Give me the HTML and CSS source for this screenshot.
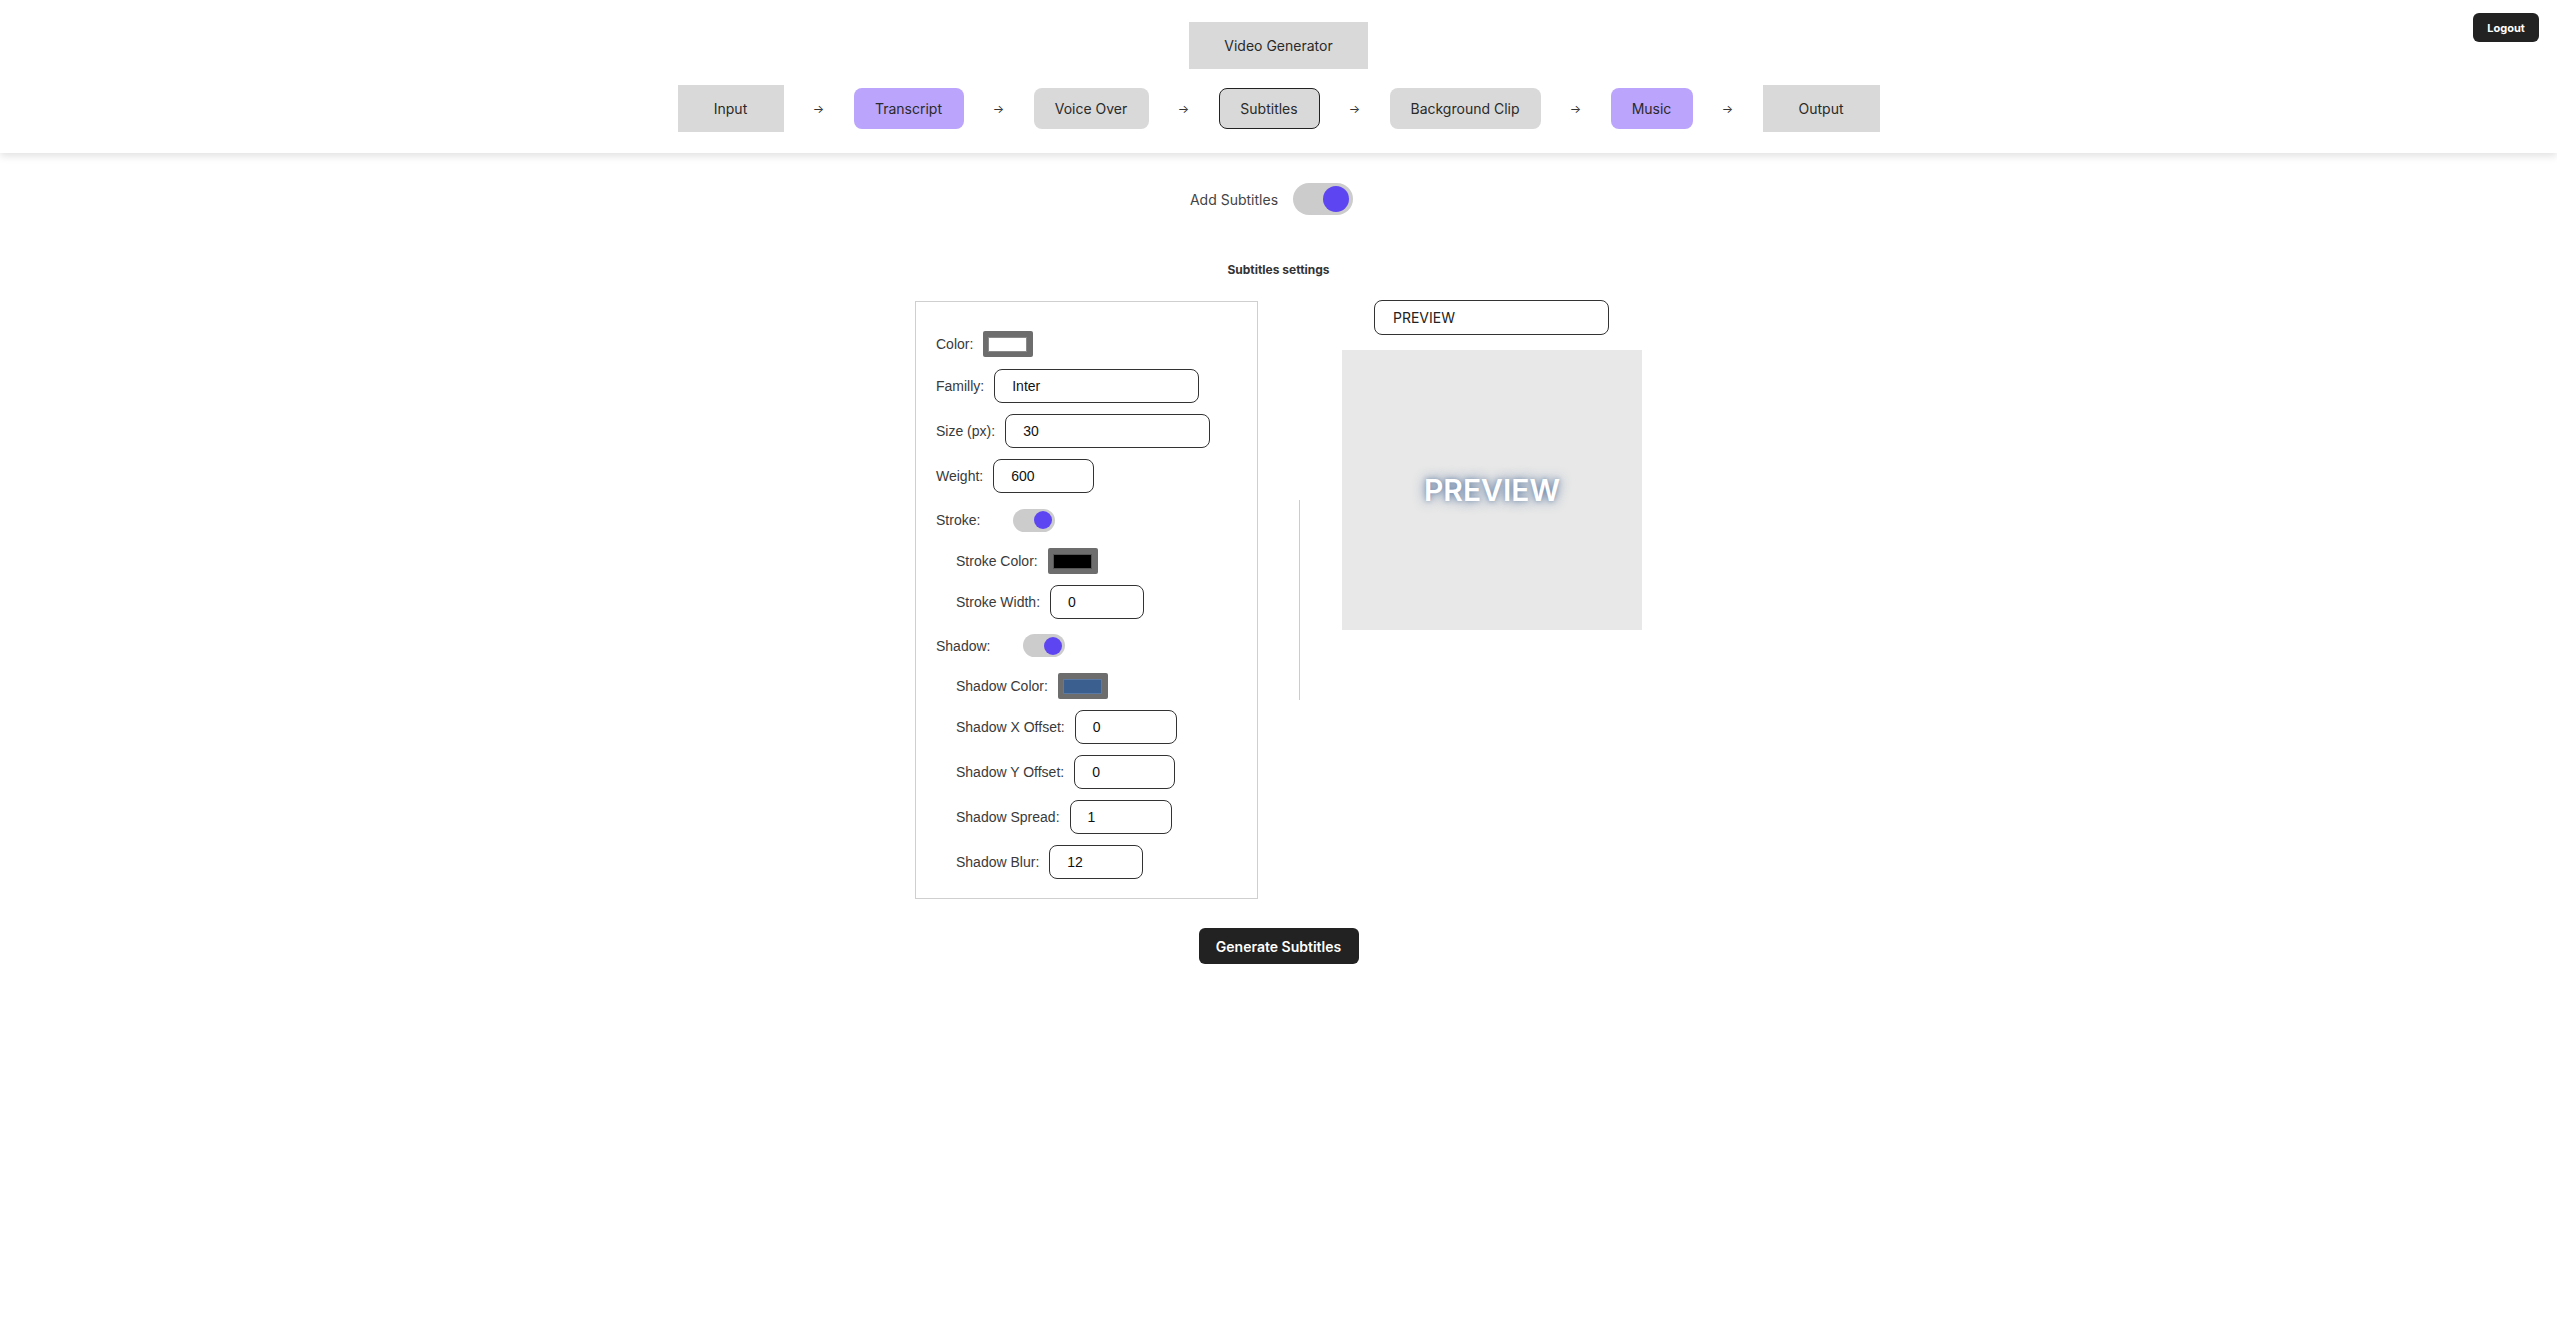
FILE: index.html
```html
<!DOCTYPE html>
<html lang="en">
<head>
<meta charset="utf-8">
<title>Video Generator</title>
<link rel="stylesheet" href="styles.css">
</head>
<body>
<header class="header">
  <div class="title-box">Video Generator</div>
  <nav class="steps">
    <div class="step step-plain w-input">Input</div>
    <span class="arrow">→</span>
    <div class="step step-round step-purple w-transcript">Transcript</div>
    <span class="arrow">→</span>
    <div class="step step-round w-voice">Voice Over</div>
    <span class="arrow">→</span>
    <div class="step step-round step-active w-subtitles">Subtitles</div>
    <span class="arrow">→</span>
    <div class="step step-round w-bg">Background Clip</div>
    <span class="arrow">→</span>
    <div class="step step-round step-purple w-music">Music</div>
    <span class="arrow">→</span>
    <div class="step step-plain w-output">Output</div>
  </nav>
  <button class="logout">Logout</button>
</header>

<main class="main">
  <div class="add-row">
    <span class="add-label">Add Subtitles</span>
    <div class="toggle toggle-big"><span class="knob"></span></div>
  </div>

  <h2 class="section-title">Subtitles settings</h2>

  <div class="settings">
    <div class="panel">
      <div class="row row-swatch">
        <span class="label">Color:</span>
        <div class="swatch"><span class="swatch-fill fill-white"></span></div>
      </div>
      <div class="row">
        <span class="label">Familly:</span>
        <div class="field field-wide">Inter</div>
      </div>
      <div class="row">
        <span class="label">Size (px):</span>
        <div class="field field-wide">30</div>
      </div>
      <div class="row">
        <span class="label">Weight:</span>
        <div class="field field-w101">600</div>
      </div>
      <div class="row row-toggle">
        <span class="label">Stroke:</span>
        <div class="toggle toggle-small"><span class="knob"></span></div>
      </div>
      <div class="row row-swatch sub">
        <span class="label">Stroke Color:</span>
        <div class="swatch"><span class="swatch-fill fill-black"></span></div>
      </div>
      <div class="row sub">
        <span class="label">Stroke Width:</span>
        <div class="field field-w94">0</div>
      </div>
      <div class="row row-toggle row-toggle2">
        <span class="label">Shadow:</span>
        <div class="toggle toggle-small"><span class="knob"></span></div>
      </div>
      <div class="row row-swatch sub">
        <span class="label">Shadow Color:</span>
        <div class="swatch"><span class="swatch-fill fill-blue"></span></div>
      </div>
      <div class="row sub">
        <span class="label">Shadow X Offset:</span>
        <div class="field field-w102">0</div>
      </div>
      <div class="row sub">
        <span class="label">Shadow Y Offset:</span>
        <div class="field field-w101">0</div>
      </div>
      <div class="row sub">
        <span class="label">Shadow Spread:</span>
        <div class="field field-w102">1</div>
      </div>
      <div class="row sub">
        <span class="label">Shadow Blur:</span>
        <div class="field field-w94">12</div>
      </div>
    </div>

    <div class="divider"></div>

    <div class="preview-col">
      <div class="preview-input">PREVIEW</div>
      <div class="preview-box"><span class="preview-text">PREVIEW</span></div>
    </div>
  </div>

  <div class="actions">
    <button class="generate">Generate Subtitles</button>
  </div>
</main>
</body>
</html>
```

FILE: styles.css
```css
* { box-sizing: border-box; }

html, body {
  margin: 0;
  padding: 0;
  background: #ffffff;
  font-family: Inter, "Noto Sans", "Liberation Sans", sans-serif;
  color: #222;
}

/* Header */
.header {
  position: relative;
  display: flex;
  flex-direction: column;
  align-items: center;
  gap: 16px;
  padding: 22px 0 21px;
  background: #fff;
  box-shadow: 0 3px 8px rgba(0, 0, 0, 0.12);
}

.title-box {
  height: 47px;
  width: 179px;
  display: flex;
  align-items: center;
  justify-content: center;
  background: #d9d9d9;
  font-size: 14px;
  color: #2a2a2a;
}

.steps {
  display: flex;
  align-items: center;
  gap: 29px;
  height: 47px;
}

.step {
  display: flex;
  align-items: center;
  justify-content: center;
  font-size: 14px;
  color: #2a2a2a;
  background: #d9d9d9;
  white-space: nowrap;
}

.step-plain { height: 47px; }

.step-round {
  height: 41px;
  border-radius: 8px;
}

.step-purple { background: #bba4fc; }

.step-active { border: 1px solid #222; }

.w-input { width: 106px; }
.w-transcript { width: 110px; }
.w-voice { width: 115px; }
.w-subtitles { width: 101px; }
.w-bg { width: 151px; }
.w-music { width: 82px; }
.w-output { width: 117px; }

.arrow {
  width: 12px;
  font-size: 12px;
  color: #333;
  text-align: center;
}

.logout {
  position: absolute;
  top: 13px;
  right: 18px;
  height: 29px;
  width: 66px;
  padding: 0;
  border: none;
  border-radius: 6px;
  background: #222;
  color: #fff;
  font-family: Inter, "Liberation Sans", sans-serif;
  font-size: 11px;
  font-weight: 700;
}

/* Main */
.main {
  display: flex;
  flex-direction: column;
  align-items: center;
}

.add-row {
  margin-top: 30px;
  display: flex;
  align-items: center;
  gap: 15px;
  padding-right: 14px;
}

.add-label {
  font-size: 14px;
  color: #444;
}

.toggle {
  position: relative;
  background: #cccccc;
  display: flex;
  align-items: center;
  justify-content: flex-end;
}

.toggle .knob {
  display: block;
  border-radius: 50%;
  background: #5e45f2;
}

.toggle-big {
  width: 60px;
  height: 32px;
  border-radius: 16px;
  padding-right: 4px;
}
.toggle-big .knob { width: 26px; height: 26px; }

.toggle-small {
  width: 42px;
  height: 23px;
  border-radius: 12px;
  padding-right: 3px;
  margin-left: 23px;
}
.toggle-small .knob { width: 18px; height: 18px; }

.section-title {
  margin: 47px 0 0;
  font-size: 12px;
  line-height: 16px;
  font-weight: 700;
  color: #333;
}

.settings {
  margin-top: 23px;
  display: flex;
  align-items: flex-start;
}

.panel {
  width: 343px;
  border: 1px solid #cfcfcf;
  padding: 28px 20px 19px 20px;
  display: flex;
  flex-direction: column;
  gap: 11px;
  font-family: "Liberation Sans", Arial, sans-serif;
}

.row {
  display: flex;
  align-items: center;
  height: 34px;
}

.row.sub { padding-left: 20px; }

.row-swatch { height: 27px; }
.row:first-child { height: 28px; }

.row-toggle { height: 32px; }
.row-toggle2 { height: 31px; }

.label {
  font-size: 14px;
  color: #3a3a3a;
  margin-right: 10px;
  white-space: nowrap;
}

.swatch {
  width: 50px;
  height: 26px;
  background: #6d6d6d;
  border-radius: 2px;
  padding: 6px 6px 5px 5px;
  display: flex;
}

.swatch-fill {
  flex: 1;
  border: 1px solid #8a8a8a;
}
.fill-white { background: #ffffff; }
.fill-black { background: #000000; border-color: #555; }
.fill-blue { background: #3b5f8f; border-color: #5a7aa5; }

.field {
  height: 34px;
  border: 1px solid #333;
  border-radius: 8px;
  padding-left: 17px;
  display: flex;
  align-items: center;
  font-size: 14px;
  color: #111;
}

.field-wide { width: 205px; }
.field-w101 { width: 101px; }
.field-w102 { width: 102px; }
.field-w94 { width: 94px; }

.divider {
  align-self: center;
  width: 1px;
  height: 200px;
  background: #cccccc;
  margin: 0 42px 0 41px;
}

.preview-col {
  width: 300px;
  display: flex;
  flex-direction: column;
  align-items: center;
  gap: 15px;
  margin-top: -1px;
}

.preview-input {
  width: 235px;
  height: 35px;
  border: 1px solid #333;
  border-radius: 8px;
  padding-left: 18px;
  display: flex;
  align-items: center;
  font-size: 14px;
  color: #222;
  align-self: flex-end;
  margin-right: 33px;
}

.preview-box {
  width: 300px;
  height: 280px;
  background: #e8e8e8;
  display: flex;
  align-items: center;
  justify-content: center;
}

.preview-text {
  font-family: Inter, "Noto Sans", sans-serif;
  font-size: 30px;
  font-weight: 600;
  color: #ffffff;
  text-shadow: 0 0 12px rgba(59, 95, 143, 0.85), 0 0 4px rgba(59, 95, 143, 0.4);
}

.actions {
  margin-top: 29px;
  display: flex;
  justify-content: center;
}

.generate {
  height: 36px;
  width: 160px;
  border: none;
  border-radius: 6px;
  background: #222;
  color: #fff;
  font-family: Inter, "Liberation Sans", sans-serif;
  font-size: 14px;
  font-weight: 600;
}
```
